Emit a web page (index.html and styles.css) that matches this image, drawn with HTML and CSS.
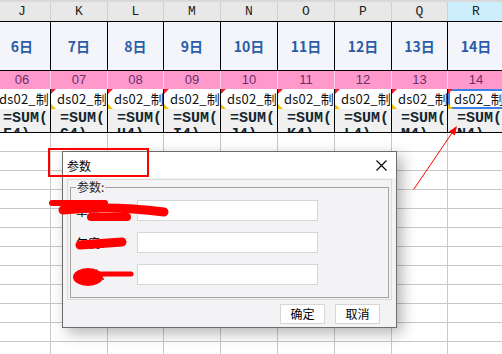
FILE: index.html
```html
<!DOCTYPE html>
<html lang="zh">
  <head>
    <meta charset="UTF-8" />
    <meta name="viewport" content="width=device-width, initial-scale=1.0" />
    <title>参数</title>
    <link rel="stylesheet" href="styles.css">
  </head>
  <body>
    <div class="sheet">
      <div class="row head">
        <div class="c">J</div><div class="c">K</div><div class="c">L</div>
        <div class="c">M</div><div class="c">N</div><div class="c">O</div>
        <div class="c">P</div><div class="c">Q</div><div class="c sel">R</div>
      </div>
      <div class="row days">
        <div class="c">6日</div><div class="c">7日</div><div class="c">8日</div>
        <div class="c">9日</div><div class="c">10日</div><div class="c">11日</div>
        <div class="c">12日</div><div class="c">13日</div><div class="c">14日</div>
      </div>
      <div class="row nums">
        <div class="c">06</div><div class="c">07</div><div class="c">08</div>
        <div class="c">09</div><div class="c">10</div><div class="c">11</div>
        <div class="c">12</div><div class="c">13</div><div class="c">14</div>
      </div>
      <div class="row names">
        <div class="c first">ds02_制</div><div class="c">ds02_制</div><div class="c">ds02_制</div>
        <div class="c">ds02_制</div><div class="c">ds02_制</div><div class="c">ds02_制</div>
        <div class="c">ds02_制</div><div class="c">ds02_制</div><div class="c active">ds02_制</div>
      </div>
      <div class="row sums">
        <div class="c">=SUM(<br>F4)</div><div class="c">=SUM(<br>G4)</div><div class="c">=SUM(<br>H4)</div>
        <div class="c">=SUM(<br>I4)</div><div class="c">=SUM(<br>J4)</div><div class="c">=SUM(<br>K4)</div>
        <div class="c">=SUM(<br>L4)</div><div class="c">=SUM(<br>M4)</div><div class="c">=SUM(<br>N4)</div>
      </div>
      <div class="row empty"><div class="c"></div><div class="c"></div><div class="c"></div><div class="c"></div><div class="c"></div><div class="c"></div><div class="c"></div><div class="c"></div><div class="c"></div></div>
      <div class="row empty"><div class="c"></div><div class="c"></div><div class="c"></div><div class="c"></div><div class="c"></div><div class="c"></div><div class="c"></div><div class="c"></div><div class="c"></div></div>
      <div class="row empty"><div class="c"></div><div class="c"></div><div class="c"></div><div class="c"></div><div class="c"></div><div class="c"></div><div class="c"></div><div class="c"></div><div class="c"></div></div>
      <div class="row empty"><div class="c"></div><div class="c"></div><div class="c"></div><div class="c"></div><div class="c"></div><div class="c"></div><div class="c"></div><div class="c"></div><div class="c"></div></div>
      <div class="row empty"><div class="c"></div><div class="c"></div><div class="c"></div><div class="c"></div><div class="c"></div><div class="c"></div><div class="c"></div><div class="c"></div><div class="c"></div></div>
      <div class="row empty"><div class="c"></div><div class="c"></div><div class="c"></div><div class="c"></div><div class="c"></div><div class="c"></div><div class="c"></div><div class="c"></div><div class="c"></div></div>
      <div class="row empty"><div class="c"></div><div class="c"></div><div class="c"></div><div class="c"></div><div class="c"></div><div class="c"></div><div class="c"></div><div class="c"></div><div class="c"></div></div>
      <div class="row empty"><div class="c"></div><div class="c"></div><div class="c"></div><div class="c"></div><div class="c"></div><div class="c"></div><div class="c"></div><div class="c"></div><div class="c"></div></div>
      <div class="row empty"><div class="c"></div><div class="c"></div><div class="c"></div><div class="c"></div><div class="c"></div><div class="c"></div><div class="c"></div><div class="c"></div><div class="c"></div></div>
      <div class="row empty"><div class="c"></div><div class="c"></div><div class="c"></div><div class="c"></div><div class="c"></div><div class="c"></div><div class="c"></div><div class="c"></div><div class="c"></div></div>
      <div class="row empty"><div class="c"></div><div class="c"></div><div class="c"></div><div class="c"></div><div class="c"></div><div class="c"></div><div class="c"></div><div class="c"></div><div class="c"></div></div>
      <div class="row empty"><div class="c"></div><div class="c"></div><div class="c"></div><div class="c"></div><div class="c"></div><div class="c"></div><div class="c"></div><div class="c"></div><div class="c"></div></div>
    </div>

    <div class="dialog">
      <div class="dlg-title">
        <span>参数</span>
        <svg class="close" width="11" height="11" viewBox="0 0 11 11">
          <path d="M0.5 0.5 L10.5 10.5 M10.5 0.5 L0.5 10.5" stroke="#000" stroke-width="1.1" fill="none" />
        </svg>
      </div>
      <div class="dlg-body">
        <div class="panel">
          <fieldset class="group">
            <legend>参数:</legend>
            <div class="field"><label>单位：</label><input type="text" /></div>
            <div class="field"><label>年度：</label><input type="text" /></div>
            <div class="field"><label>月份：</label><input type="text" /></div>
          </fieldset>
        </div>
        <div class="dlg-foot">
          <button>确定</button>
          <button>取消</button>
        </div>
      </div>
    </div>

    <!-- annotations drawn over the screenshot -->
    <svg class="marks" width="502" height="354" viewBox="0 0 502 354">
      <rect x="49" y="149" width="99" height="27" fill="none" stroke="#f00" stroke-width="2" />
      <g stroke="#f00" stroke-linecap="round" fill="none">
        <path d="M52 203 L105 203" stroke-width="6" />
        <path d="M63 210 Q110 205 164 212" stroke-width="9" />
        <path d="M91 217 L127 217" stroke-width="8" />
        <path d="M80 245 L122 242" stroke-width="9" />
        <path d="M100 274 L131 274" stroke-width="5" />
        <path d="M414 189 L452 133" stroke-width="1" />
      </g>
      <ellipse cx="88" cy="277" rx="15" ry="9" fill="#f00" />
      <polygon points="457,126 454.8,135.4 449,131.4" fill="#f00" />
    </svg>
  </body>
</html>
```

FILE: styles.css
```css
body {
  margin: 0;
  width: 502px;
  height: 354px;
  overflow: hidden;
  background: #fff;
  position: relative;
  font-family: "Noto Sans CJK SC", sans-serif;
}
.sheet {
  border-top: 2px solid #d9d9d9;
  margin-left: -6px;
}
.row {
  display: grid;
  grid-template-columns: 57px 57px 56px 57px 57px 57px 57px 56px 57px;
}
.c {
  box-sizing: border-box;
  overflow: hidden;
  white-space: nowrap;
}
.head .c {
  height: 19px;
  background: #e8e8e8;
  border-right: 1px solid #d2d2d2;
  font-family: "Liberation Mono", monospace;
  font-size: 13px;
  line-height: 19px;
  text-align: center;
  color: #222;
}
.head .sel {
  background: #cdeefc;
}
.days .c {
  height: 50px;
  border-top: 1px solid #000;
  border-bottom: 1px solid #000;
  border-right: 1px solid #000;
  background: #f4f5fa;
  font-size: 14px;
  font-weight: bold;
  line-height: 48px;
  text-align: center;
  color: #2a5ca8;
}
.nums .c {
  height: 18px;
  background: #ff99cc;
  border-right: 1px solid #ffd0e6;
  font-family: "Liberation Sans", sans-serif;
  font-size: 13px;
  line-height: 18px;
  text-align: center;
  color: #6b2f6b;
}
.names .c {
  position: relative;
  height: 20px;
  border-right: 1px solid #000;
  padding-left: 6px;
  font-size: 13px;
  line-height: 19px;
  letter-spacing: 0.2px;
  color: #111;
}
.names .first {
  padding-left: 5px;
}
.names .c::before,
.names .c::after {
  content: "";
  position: absolute;
  left: 0;
  border-style: solid;
  border-color: transparent;
}
.names .c::before {
  top: 0;
  border-width: 5px 5px 0 0;
  border-top-color: #f0202a;
}
.names .c::after {
  bottom: 0;
  border-width: 5px 0 0 5px;
  border-left-color: #f2c200;
}
.names .first::before,
.names .first::after {
  display: none;
}
.names .active {
  box-shadow: inset 0 0 0 2px #3a80e8;
}
.sums .c {
  height: 24px;
  background: #f0f0f0;
  border-right: 1px solid #000;
  border-bottom: 1px solid #000;
  padding: 2px 0 0 9px;
  font-family: "Liberation Mono", monospace;
  font-size: 15px;
  font-weight: bold;
  line-height: 16px;
  color: #14262e;
  white-space: normal;
}
.empty .c {
  height: 19px;
  border-right: 1px solid #c8c8c8;
  border-bottom: 1px solid #c8c8c8;
}

.dialog {
  position: absolute;
  left: 62px;
  top: 151px;
  width: 335px;
  height: 177px;
  box-sizing: border-box;
  border: 1px solid #6d6d6d;
  background: #f3f3f5;
  box-shadow: 5px 5px 14px rgba(0, 0, 0, 0.3);
  display: flex;
  flex-direction: column;
  font-size: 12px;
  color: #000;
}
.dlg-title {
  height: 26px;
  background: #fff;
  display: flex;
  align-items: center;
  justify-content: space-between;
  padding: 0 9px 0 4px;
  font-size: 12px;
}
.dlg-body {
  flex: 1;
  display: flex;
  flex-direction: column;
  padding: 1px 4px 0 4px;
}
.panel {
  height: 121px;
  box-sizing: border-box;
  border: 1px solid #dadada;
  padding: 0 2px 1px 2px;
  display: flex;
}
.group {
  flex: 1;
  margin: 0;
  padding: 6px 0 0 5px;
  border: 1px solid #a3a39b;
  display: flex;
  flex-direction: column;
  gap: 11px;
}
.group legend {
  padding: 0 1px;
  line-height: 14px;
  font-size: 12px;
  color: #222;
}
.field {
  display: flex;
  align-items: center;
}
.field label {
  width: 61px;
  font-size: 12px;
}
.field input {
  width: 181px;
  height: 21px;
  box-sizing: border-box;
  border: 1px solid #d6d6d6;
  background: #fff;
  padding: 0 4px;
}
.dlg-foot {
  display: flex;
  justify-content: flex-end;
  gap: 10px;
  padding: 4px 12px 0 0;
}
.dlg-foot button {
  width: 45px;
  height: 20px;
  box-sizing: border-box;
  border: 1px solid #d6d6d6;
  background: #fff;
  padding: 0;
  font-family: "Noto Sans CJK SC", sans-serif;
  font-size: 12px;
  line-height: 18px;
  color: #000;
}
.marks {
  position: absolute;
  left: 0;
  top: 0;
  pointer-events: none;
}
```
